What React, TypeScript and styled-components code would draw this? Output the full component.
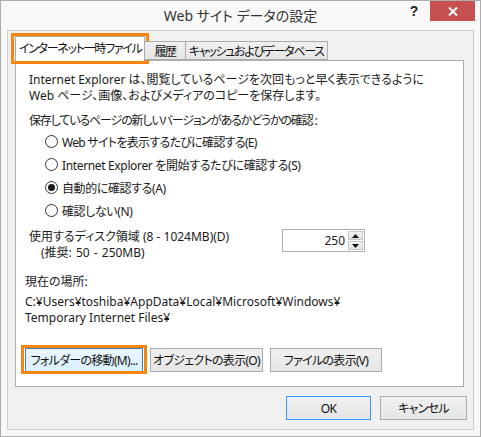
import styled, { createGlobalStyle } from 'styled-components'

const GlobalStyle = createGlobalStyle`
  html, body {
    margin: 0;
    padding: 0;
    background: #ffffff;
  }
  body {
    font-family: "Noto Sans", "Noto Sans CJK JP", sans-serif;
    font-size: 12px;
    color: #1a1a1a;
    font-feature-settings: "palt";
  }
  * {
    box-sizing: border-box;
  }
`

const radios = [
  { label: 'Web サイトを表示するたびに確認する(E)', checked: false, tight: 0.7 },
  { label: 'Internet Explorer を開始するたびに確認する(S)', checked: false, tight: 0.35 },
  { label: '自動的に確認する(A)', checked: true, tight: 0.4 },
  { label: '確認しない(N)', checked: false, tight: 0.4 },
]

const App = () => {
  return (
    <>
      <GlobalStyle />
      <Window>
        <TitleBar>
          <span />
          <Title>Web サイト データの設定</Title>
          <Controls>
            <HelpButton>?</HelpButton>
            <CloseButton>
              <svg width='10' height='9' viewBox='0 0 10 9'>
                <path d='M1 0.5 L9 8.5 M9 0.5 L1 8.5' stroke='#ffffff' strokeWidth='2' />
              </svg>
            </CloseButton>
          </Controls>
        </TitleBar>

        <Client>
          <TabStrip>
            <Tab $active $pad={3}>
              インターネット一時ファイル
              <Highlight />
            </Tab>
            <Tab $pad={9}>履歴</Tab>
            <Tab $pad={3}>キャッシュおよびデータベース</Tab>
          </TabStrip>

          <Panel>
            <Text>
              Internet Explorer は、閲覧しているページを次回もっと早く表示できるように
              <br />
              Web ページ、画像、およびメディアのコピーを保存します。
            </Text>
            <Heading>保存しているページの新しいバージョンがあるかどうかの確認 :</Heading>
            <RadioList>
              {radios.map((r) => (
                <RadioRow key={r.label}>
                  <RadioCircle $checked={r.checked} />
                  <RadioLabel $tight={r.tight}>{r.label}</RadioLabel>
                </RadioRow>
              ))}
            </RadioList>

            <DiskRow>
              <DiskLabel>
                使用するディスク領域 (8 - 1024MB)(D)
                <Indent>(推奨: 50 - 250MB)</Indent>
              </DiskLabel>
              <SpinBox>
                <SpinValue>250</SpinValue>
                <SpinButtons>
                  <SpinButton>
                    <svg width='7' height='4' viewBox='0 0 7 4'>
                      <path d='M0 4 L3.5 0 L7 4 Z' fill='#111' />
                    </svg>
                  </SpinButton>
                  <SpinButton>
                    <svg width='7' height='4' viewBox='0 0 7 4'>
                      <path d='M0 0 L3.5 4 L7 0 Z' fill='#111' />
                    </svg>
                  </SpinButton>
                </SpinButtons>
              </SpinBox>
            </DiskRow>

            <Location>
              <Text>現在の場所:</Text>
              <Path>
                C:¥Users¥toshiba¥AppData¥Local¥Microsoft¥Windows¥
                <br />
                Temporary Internet Files¥
              </Path>
              <ButtonRow>
                <Button $width={118} $hover>
                  フォルダーの移動(M)...
                  <Highlight />
                </Button>
                <Button $width={113}>オブジェクトの表示(O)</Button>
                <Button $width={112}>ファイルの表示(V)</Button>
              </ButtonRow>
            </Location>
          </Panel>

          <Footer>
            <Button $width={85} $default>
              OK
            </Button>
            <Button $width={87}>キャンセル</Button>
          </Footer>
        </Client>
      </Window>
    </>
  )
}

const Window = styled.div`
  width: 481px;
  height: 437px;
  border: 1px solid #acacac;
  background: #f8f8f8;
  display: flex;
  flex-direction: column;
`

const TitleBar = styled.div`
  height: 29px;
  display: grid;
  grid-template-columns: 1fr auto 1fr;
  align-items: center;
`

const Title = styled.div`
  font-size: 14px;
  color: #333333;
  padding-bottom: 1px;
`

const Controls = styled.div`
  justify-self: end;
  align-self: start;
  display: flex;
  margin-right: 5px;
`

const HelpButton = styled.div`
  width: 26px;
  height: 20px;
  padding-right: 6px;
  display: flex;
  align-items: center;
  justify-content: center;
  font-family: "Liberation Sans", sans-serif;
  font-weight: bold;
  font-size: 14px;
  color: #222222;
`

const CloseButton = styled.div`
  width: 45px;
  height: 20px;
  background: #c75050;
  display: flex;
  align-items: center;
  justify-content: center;
`

const Client = styled.div`
  flex: 1;
  margin: 0 6px 6px;
  border: 1px solid #cdcdcd;
  background: #f0f0f0;
  padding: 5px 9px 0 7px;
  display: flex;
  flex-direction: column;
`

const TabStrip = styled.div`
  display: flex;
  align-items: flex-end;
  margin-bottom: -1px;
  position: relative;
  z-index: 1;
`

const Tab = styled.div<{ $active?: boolean; $pad: number }>`
  position: relative;
  height: ${(p) => (p.$active ? '25px' : '19px')};
  margin-bottom: ${(p) => (p.$active ? '0' : '1px')};
  margin-left: ${(p) => (p.$active ? '0' : '-1px')};
  padding: 0 ${(p) => p.$pad}px ${(p) => (p.$active ? '2px' : '0')};
  border: 1px solid #acacac;
  border-bottom: ${(p) => (p.$active ? 'none' : '1px solid #acacac')};
  background: ${(p) =>
    p.$active ? '#ffffff' : 'linear-gradient(#f0f0f0, #e5e5e5)'};
  display: flex;
  align-items: center;
  justify-content: center;
  white-space: nowrap;
  letter-spacing: -1.3px;
  color: #111111;
`

const Highlight = styled.span`
  position: absolute;
  inset: -4px -5px -3px -5px;
  border: 3px solid #f7850f;
  pointer-events: none;
`

const Panel = styled.div`
  background: #ffffff;
  border: 1px solid #acacac;
  padding: 11px 13px 14px 13px;
  display: flex;
  flex-direction: column;
`

const Text = styled.div`
  line-height: 16px;
  white-space: nowrap;
`

const Heading = styled(Text)`
  margin-top: 9px;
  letter-spacing: -1.15px;
`

const RadioList = styled.div`
  margin-top: 1px;
  padding-left: 16px;
  display: flex;
  flex-direction: column;
`

const RadioRow = styled.div`
  height: 23px;
  display: flex;
  align-items: center;
  gap: 4px;
  white-space: nowrap;
`

const RadioLabel = styled.span<{ $tight: number }>`
  letter-spacing: -${(p) => p.$tight}px;
`

const RadioCircle = styled.span<{ $checked?: boolean }>`
  width: 13px;
  height: 13px;
  border-radius: 50%;
  border: 1px solid #333333;
  background: #ffffff;
  display: flex;
  align-items: center;
  justify-content: center;
  &::after {
    content: '';
    width: 7px;
    height: 7px;
    border-radius: 50%;
    background: ${(p) => (p.$checked ? '#1a1a1a' : 'transparent')};
  }
`

const DiskRow = styled.div`
  margin-top: 7px;
  display: flex;
  align-items: flex-start;
`

const DiskLabel = styled.div`
  width: 253px;
  line-height: 16px;
  white-space: nowrap;
`

const Indent = styled.div`
  padding-left: 12px;
  word-spacing: 1px;
`

const SpinBox = styled.div`
  width: 83px;
  height: 23px;
  border: 1px solid #abadb3;
  background: #ffffff;
  display: flex;
  align-items: center;
  padding: 0 1px 0 4px;
`

const SpinValue = styled.div`
  flex: 1;
  text-align: right;
  padding-right: 3px;
`

const SpinButtons = styled.div`
  display: flex;
  flex-direction: column;
  gap: 1px;
`

const SpinButton = styled.div`
  width: 15px;
  height: 9px;
  border: 1px solid #c6c6c6;
  background: linear-gradient(#f4f4f4, #e2e2e2);
  display: flex;
  align-items: center;
  justify-content: center;
`

const Location = styled.div`
  margin-top: 13px;
  margin-left: -4px;
  display: flex;
  flex-direction: column;
`

const Path = styled(Text)`
  margin-top: 4px;
`

const ButtonRow = styled.div`
  margin-top: 22px;
  display: flex;
  gap: 7px;
`

const Button = styled.div<{ $width: number; $hover?: boolean; $default?: boolean }>`
  position: relative;
  width: ${(p) => p.$width}px;
  height: 24px;
  border: 1px solid
    ${(p) => (p.$hover ? '#3c7fb1' : p.$default ? '#3399ff' : '#acacac')};
  background: ${(p) =>
    p.$hover ? 'linear-gradient(#eaf6fd, #d9f0fc)' : 'linear-gradient(#f0f0f0, #e5e5e5)'};
  display: flex;
  align-items: center;
  justify-content: center;
  white-space: nowrap;
  letter-spacing: -0.7px;
  color: #111111;
`

const Footer = styled.div`
  margin-top: 9px;
  margin-right: -3px;
  display: flex;
  justify-content: flex-end;
  gap: 9px;
`

export default App
